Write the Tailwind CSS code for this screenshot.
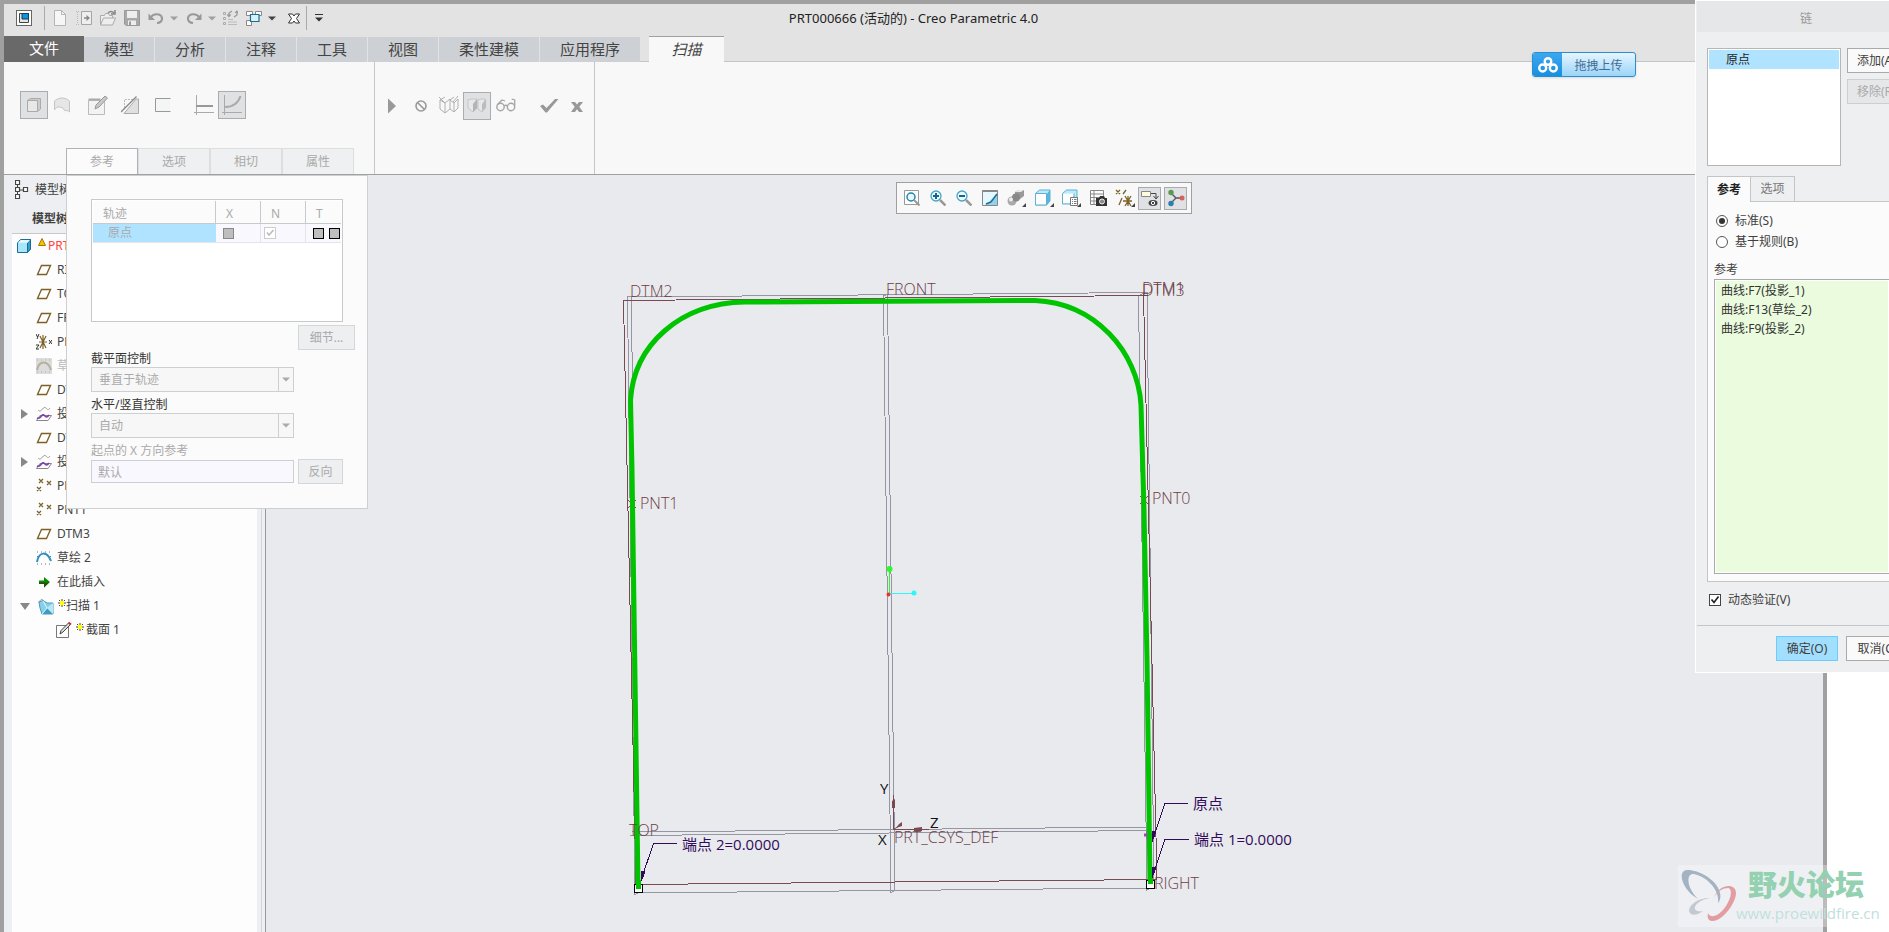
<!DOCTYPE html>
<html lang="zh-CN">
<head>
<meta charset="utf-8">
<meta name="viewport" content="width=device-width, initial-scale=1">
<title>PRT000666 (活动的) - Creo Parametric 4.0</title>
<script src="https://cdn.jsdelivr.net/npm/@tailwindcss/browser@4"></script>
</head>
<body class="relative flex min-h-screen overflow-hidden bg-white font-['Noto_Sans','Noto_Sans_CJK_SC',sans-serif] text-xs text-[#404040]">

<!-- shared symbols -->
<svg class="hidden">
  <symbol id="plane" viewBox="0 0 16 16"><path d="M5.500 3.500H14.500L10.500 12.500H1.500Z" fill="#fff" stroke="#7d6228" stroke-width="1.400"/></symbol>
  <symbol id="points" viewBox="0 0 16 16"><path d="M3 1l4 4m0-4l-4 4M11 3l4 4m0-4l-4 4M1 9l4 4m0-4l-4 4" stroke="#7d6228" stroke-width="1.300" fill="none"/></symbol>
  <symbol id="proj" viewBox="0 0 16 16"><path d="M4 9.500H15.500L12 14.500H.500Z" fill="#fff" stroke="#888"/><path d="M2 4c2 2 3 1 4.500-1S9 1 10 2s2 3 4 0" fill="none" stroke="#999"/><path d="M1 12c2 1 3 0 4.500-2S8 9 9 10s2 2 4-1" fill="none" stroke="#7a3fb0" stroke-width="1.600"/></symbol>
  <symbol id="spark" viewBox="0 0 8 8"><path d="M4 0v8M0 4h8M1 1l6 6M7 1L1 7" stroke="#444"/><rect x="2" y="2" width="4" height="4" fill="#ff0"/></symbol>
  <symbol id="caret" viewBox="0 0 8 5"><path d="M0 .500h8L4 4.500Z" fill="currentColor"/></symbol>
</svg>

<main class="flex min-w-0 flex-1 flex-col border-4 border-b-0 border-[#a0a0a0] bg-[#e8eaee]">

  <!-- title bar -->
  <header class="grid h-8 grid-cols-[1fr_auto_1fr] bg-[#e3e3e3]">
    <div class="flex h-7 items-center pl-2 text-[#a0a0a0]">
      <button class="flex w-6 justify-center" aria-label="窗口"><svg class="size-4" viewBox="0 0 16 16"><rect x=".5" y=".5" width="15" height="15" fill="#fff" stroke="#666"/><path d="M3.500 3.500h9v9h-9z" fill="#e3e3e3" stroke="#444"/><path d="M6 3.500h6.500V9H6z" fill="#0a95dc" stroke="#173b52"/></svg></button>
      <span class="ml-2 h-6 w-px bg-[#aaa]"></span>
      <button class="ml-[3px] flex w-6 justify-center" aria-label="新建"><svg class="size-4" viewBox="0 0 16 16"><path d="M2.500.500h7l4 4v11h-11z" fill="#f6f6f6" stroke="#b5b5b5"/><path d="M9.500.500v4h4" fill="none" stroke="#b5b5b5"/></svg></button>
      <button class="flex w-6 justify-center" aria-label="插入"><svg class="size-4" viewBox="0 0 16 16"><path d="M5.500 1.500h10v13h-10z" fill="#eee" stroke="#a5a5a5"/><path d="M0 1.500h4M0 14.500h4M1.500 2v12" stroke="#bbb" stroke-dasharray="1 1"/><path d="M8 8h4" stroke="#888" stroke-width="1.500"/><path d="M10.500 5l3.500 3-3.500 3z" fill="#888"/></svg></button>
      <button class="flex w-6 justify-center" aria-label="打开"><svg class="size-4" viewBox="0 0 16 16"><path d="M.500 15V5.500h4l1-2h3l1 2h3V8M.500 15l3-7H15.500l-3 7Z" fill="#eee" stroke="#aaa"/><path d="M8 3c2-2 4-2 6 0M15 0v4h-4" fill="none" stroke="#888" stroke-width="1.500"/></svg></button>
      <button class="flex w-6 justify-center" aria-label="保存"><svg class="size-4" viewBox="0 0 16 16"><path d="M.500.500h15v15H2l-1.500-1.500Z" fill="#a8a8a8" stroke="#999"/><path d="M3 1h10v7H3zM4 10.500h8V15H4z" fill="#eee"/><path d="M5 11.500h2V15H5z" fill="#999"/></svg></button>
      <button class="flex w-6 justify-center" aria-label="撤销"><svg class="size-4" viewBox="0 0 16 16"><path d="M2.500 8C5 3 13 3 14 8c.500 3-2 5-5 5" fill="none" stroke="#999" stroke-width="2.200"/><path d="M.500 3.500V10H7z" fill="#999"/></svg></button>
      <button class="flex w-3 justify-center" aria-label="撤销列表"><svg class="h-[5px] w-2"><use href="#caret"/></svg></button>
      <button class="ml-0.5 flex w-6 justify-center" aria-label="重做"><svg class="size-4" viewBox="0 0 16 16"><path d="M13.500 8C11 3 3 3 2 8c-.500 3 2 5 5 5" fill="none" stroke="#999" stroke-width="2.200"/><path d="M15.500 3.500V10H9z" fill="#999"/></svg></button>
      <button class="flex w-3 justify-center" aria-label="重做列表"><svg class="h-[5px] w-2"><use href="#caret"/></svg></button>
      <button class="flex w-6 justify-center" aria-label="重新生成"><svg class="size-4" viewBox="0 0 16 16"><path d="M1.500 2.500h2v2h-2zM1.500 7.500h2v2h-2zM1.500 12.500h2v2h-2z" fill="none" stroke="#aaa"/><path d="M6 9.500h5M6 12h9M6 14.500h9" stroke="#bbb"/><path d="M7 6V3l3-2M15 2v3l-3 2" fill="none" stroke="#999" stroke-width="1.300"/><path d="M4.500 4.500h5L7 7.500zM12.500 3h4L15 0z" fill="#999"/></svg></button>
      <button class="flex w-6 justify-center" aria-label="窗口切换"><svg class="size-4" viewBox="0 0 16 16"><path d="M.500 1.500h6v4h-6zM9.500 1.500h6v4h-6zM.500 10.500h5v5h-5z" fill="#fff" stroke="#888"/><path d="M4.500 4.500h8.500v7H4.500z" fill="#d8f2fc" stroke="#1d6d93" stroke-width="1.200"/></svg></button>
      <button class="flex w-3 justify-center text-[#444]" aria-label="窗口列表"><svg class="h-[5px] w-2"><use href="#caret"/></svg></button>
      <button class="ml-1 flex w-6 justify-center" aria-label="关闭"><svg class="h-4 w-3" viewBox="0 0 12 16"><path d="M.500 4h4L6 6l1.500-2h4L8.500 8.500l3 4.500h-4L6 11l-1.500 2h-4l3-4.500Z" fill="#fff" stroke="#333"/></svg></button>
      <span class="h-6 w-px bg-[#aaa]"></span>
      <button class="ml-2 flex w-2 flex-col items-center gap-0.5 text-[#333]" aria-label="自定义"><span class="h-px w-2 bg-[#333]"></span><svg class="h-[5px] w-2"><use href="#caret"/></svg></button>
    </div>
    <h1 class="pt-1.5 text-[13px] leading-4 text-[#222]">PRT000666 (活动的) - Creo Parametric 4.0</h1>
    <span></span>
  </header>

  <!-- ribbon tabs -->
  <nav class="flex h-[26px] items-stretch bg-[#e3e3e3] text-[15px] leading-5 text-[#444]">
    <button class="w-20 bg-[#696969] pb-0.5 text-white">文件</button>
    <div class="flex gap-px pt-px">
      <button class="w-[70px] bg-[#cdd1d5] pb-0.5">模型</button>
      <button class="w-[70px] bg-[#cdd1d5] pb-0.5">分析</button>
      <button class="w-[70px] bg-[#cdd1d5] pb-0.5">注释</button>
      <button class="w-[70px] bg-[#cdd1d5] pb-0.5">工具</button>
      <button class="w-[70px] bg-[#cdd1d5] pb-0.5">视图</button>
      <button class="w-[100px] bg-[#cdd1d5] pb-0.5">柔性建模</button>
      <button class="w-[100px] bg-[#cdd1d5] pb-0.5">应用程序</button>
    </div>
    <span class="w-[9px] border-b border-[#c3c6c8]"></span>
    <button class="w-[75px] border-t border-[#a0a0a0] bg-[#f8f8f8] pb-0.5 italic">扫描</button>
    <span class="flex-1 border-b border-[#c3c6c8]"></span>
  </nav>

  <!-- ribbon -->
  <section class="relative flex h-[113px] border-b border-[#a0a0a0] bg-[#f8f8f8]">
    <div class="flex w-[371px] flex-col justify-between border-r border-[#c3c6c8] pt-[29px]">
      <div class="flex pl-4">
        <button class="flex size-7 items-center justify-center border border-[#aaadb0] bg-[#e0e1e3]" aria-label="实体"><svg class="size-4" viewBox="0 0 16 16"><path d="M1.500 3.500l3-2h10V12l-3 2.500h-10z" fill="#ccc" stroke="#aaa"/><path d="M1.500 3.500h10v11h-10z" fill="#e8e8e8" stroke="#aaa"/></svg></button>
        <button class="flex size-7 items-center justify-center" aria-label="曲面"><svg class="size-4" viewBox="0 0 16 16"><path d="M.500 4C5 0 11 0 15.500 4v11c-1-1-3-2-5-1.500C10 11 6 9.500 4 10c-2 .5-3 2-3.500 3z" fill="#e6e6e6" stroke="#c4c4c4"/></svg></button>
        <button class="ml-2 flex size-7 items-center justify-center" aria-label="草绘"><svg class="size-5" viewBox="0 0 20 20"><path d="M.500 5.500h16v14H.500z" fill="#f3f3f3" stroke="#bbb"/><path d="M.500 4.500h12" stroke="#aaa" stroke-width="2"/><path d="M7 14l1-4L17 1l2.500 2L11 12Z" fill="#c8c8c8" stroke="#999"/></svg></button>
        <button class="ml-1 flex size-7 items-center justify-center" aria-label="移除材料"><svg class="size-[18px]" viewBox="0 0 18 18"><path d="M17.500 3v14.500H3L15 3z" fill="#e0e0e0" stroke="#aaa"/><path d="M3.500 12V3.500H12" fill="none" stroke="#bbb" stroke-dasharray="2 1"/><path d="M0 16L15.500.500" stroke="#888" stroke-width="1.300"/></svg></button>
        <button class="ml-[5px] flex size-7 items-center justify-center" aria-label="薄板"><svg class="size-4" viewBox="0 0 16 16"><path d="M15.500 1.500H.500v13h15" fill="#f4f6f6" stroke="#999"/></svg></button>
        <button class="ml-[13px] flex size-7 items-center justify-center" aria-label="恒定截面"><svg class="size-5" viewBox="0 0 20 20"><path d="M2.500 0v20M0 17.500h20" stroke="#aaa"/><path d="M2 11h17" stroke="#999" stroke-width="2"/></svg></button>
        <button class="flex size-7 items-center justify-center border border-[#aaadb0] bg-[#e0e1e3]" aria-label="可变截面"><svg class="size-5" viewBox="0 0 20 20"><path d="M2.500 0v20M0 17.500h20" stroke="#aaa"/><path d="M3 12c7 0 13-3 15.500-11" fill="none" stroke="#aaa" stroke-width="2"/></svg></button>
      </div>
      <div class="ml-[62px] flex text-[#aaa]">
        <button class="h-[26px] w-[72px] border border-b-0 border-[#b0b3b3] bg-[#fbfbfb]">参考</button>
        <button class="h-[26px] w-[72px] border border-b-0 border-[#dcdfe0] bg-[#eef0f1]">选项</button>
        <button class="h-[26px] w-[72px] border border-b-0 border-[#dcdfe0] bg-[#eef0f1]">相切</button>
        <button class="h-[26px] w-[72px] border border-b-0 border-[#dcdfe0] bg-[#eef0f1]">属性</button>
      </div>
    </div>
    <div class="flex w-[220px] items-start border-r border-[#c3c6c8] pt-[30px] pl-[3px]">
      <button class="flex size-7 items-center justify-center" aria-label="继续"><svg class="size-4" viewBox="0 0 16 16"><path d="M4 .500v15L12 8z" fill="#999"/></svg></button>
      <button class="ml-px flex size-7 items-center justify-center" aria-label="无预览"><svg class="size-3" viewBox="0 0 12 12"><circle cx="6" cy="6" r="5" fill="none" stroke="#999" stroke-width="1.600"/><path d="M2.500 2.500l7 7" stroke="#999" stroke-width="1.600"/></svg></button>
      <button class="flex size-7 items-center justify-center" aria-label="分离预览"><svg class="size-5" viewBox="0 0 20 20"><path d="M1 4l5 3v10l-5-4zM6 7l5-4v10l-5 4M1 4l5-3M11 4l4 3v9l-4-3M15 7l4-4v9l-4 4M11 4l4-3M0 1l6 6M19 0l-5 6" fill="none" stroke="#b0b0b0"/></svg></button>
      <button class="flex size-7 items-center justify-center border border-[#aaadb0] bg-[#e0e1e3]" aria-label="连接预览"><svg class="size-5" viewBox="0 0 20 20"><path d="M1 4l3-1h6v9l-4 4-5-4z" fill="#e8e8e8" stroke="#c4c4c4"/><path d="M6 8l4-5v9l-4 4z" fill="#b4b4b4"/><path d="M11 4l3-1h4v9l-3 4-4-3z" fill="#e8e8e8" stroke="#c4c4c4"/><path d="M15 8l4-5v9l-4 3z" fill="#bcbcbc"/></svg></button>
      <button class="ml-px flex size-7 items-center justify-center" aria-label="校验预览"><svg class="size-5" viewBox="0 0 20 20"><circle cx="4.500" cy="11" r="3.700" fill="none" stroke="#a5a5a5" stroke-width="1.400"/><circle cx="15" cy="11" r="3.700" fill="none" stroke="#a5a5a5" stroke-width="1.400"/><path d="M8 10q1.700-1.500 3.400 0M1 9l5-5 3 1M18.700 10V4l-3-1" fill="none" stroke="#a5a5a5" stroke-width="1.300"/></svg></button>
      <button class="ml-[15px] flex size-7 items-center justify-center" aria-label="确定"><svg class="size-5" viewBox="0 0 20 20"><path d="M1 10l3-1.500 3.500 3.500L16 3h3.500L8 16.500H6.500z" fill="#999"/></svg></button>
      <button class="flex size-7 items-center justify-center" aria-label="取消"><svg class="mt-0.5 size-3" viewBox="0 0 12 12"><path d="M0 1h4l2 2.500L8 1h4L8.300 5.800 12 11H8L6 8.200 4 11H0l3.700-5.200z" fill="#999"/></svg></button>
    </div>

    <!-- references slide-down panel -->
    <div class="absolute top-full left-[62px] z-10 mt-px flex h-[334px] w-[302px] flex-col items-start border border-[#cdd0d0] bg-[#fbfbfb] px-6 pt-[23px] text-[#aaa]">
      <div class="h-[123px] w-[252px] border border-[#c8caca] bg-white p-px">
        <table class="w-full table-fixed border-separate border-spacing-0 text-left">
          <colgroup><col class="w-[123px]"><col class="w-[45px]"><col class="w-[45px]"><col></colgroup>
          <thead>
            <tr class="h-[23px] bg-[#fbfbfb]">
              <th class="border-r border-b border-[#c8caca] pt-1 pl-2.5 font-normal">轨迹</th><th class="border-r border-b border-[#c8caca] pt-1 pl-2.5 font-normal">X</th><th class="border-r border-b border-[#c8caca] pt-1 pl-2.5 font-normal">N</th><th class="border-b border-[#c8caca] pt-1 pl-2.5 font-normal">T</th>
            </tr>
          </thead>
          <tbody>
            <tr class="h-[19px] bg-[#faf8ff] leading-4">
              <td class="border-b border-[#e4e4ea] bg-[#b0e3ff] pl-[15px]">原点</td>
              <td class="border-r border-b border-[#e4e4ea] pl-[7px]"><input type="checkbox" disabled aria-label="X" class="block size-[11px] appearance-none border border-[#888] bg-[#bebebe]"></td>
              <td class="border-r border-b border-[#e4e4ea] pl-[3px]"><span class="grid size-3"><input type="checkbox" checked disabled aria-label="N" class="col-start-1 row-start-1 size-3 appearance-none border border-[#ccc] bg-white"><svg class="col-start-1 row-start-1 size-3" viewBox="0 0 12 12"><path d="M3 5.500L5 8l4.500-5" fill="none" stroke="#bbb" stroke-width="1.500"/></svg></span></td>
              <td class="border-b border-[#e4e4ea] pl-[7px]"><span class="flex gap-[5px]"><input type="checkbox" disabled aria-label="T 1" class="size-[11px] shrink-0 appearance-none border border-black bg-[#bebebe]"><input type="checkbox" disabled aria-label="T 2" class="size-[11px] shrink-0 appearance-none border border-black bg-[#bebebe]"></span></td>
            </tr>
          </tbody>
        </table>
      </div>
      <button disabled class="mt-[3px] -mr-3 h-[25px] w-[57px] self-end border border-[#d4d6d8] bg-[#edeff0]">细节...</button>
      <label for="sec" class="text-xs leading-[17px] text-[#333]">截平面控制</label>
      <span class="grid h-[25px] w-[203px]">
        <select id="sec" disabled class="col-start-1 row-start-1 appearance-none border border-[#cdd0d0] bg-[#f7f7f7] pl-[7px] opacity-100"><option>垂直于轨迹</option></select>
        <span class="pointer-events-none col-start-1 row-start-1 flex w-4 items-center justify-center justify-self-end border border-[#cdd0d0]"><svg class="h-[5px] w-2"><use href="#caret"/></svg></span>
      </span>
      <label for="hv" class="pt-1 leading-[17px] text-[#333]">水平/竖直控制</label>
      <span class="grid h-[25px] w-[203px]">
        <select id="hv" disabled class="col-start-1 row-start-1 appearance-none border border-[#cdd0d0] bg-[#f7f7f7] pl-[7px] opacity-100"><option>自动</option></select>
        <span class="pointer-events-none col-start-1 row-start-1 flex w-4 items-center justify-center justify-self-end border border-[#cdd0d0]"><svg class="h-[5px] w-2"><use href="#caret"/></svg></span>
      </span>
      <label for="xdir" class="pt-1 leading-[17px]">起点的 X 方向参考</label>
      <div class="flex items-center gap-1">
        <input id="xdir" disabled value="默认" class="h-[23px] w-[203px] border border-[#cdd0d0] bg-[#faf8ff] px-1.5">
        <button disabled class="h-[25px] w-[45px] border border-[#d4d6d8] bg-[#edeff0]">反向</button>
      </div>
    </div>
  </section>

  <!-- workspace -->
  <div class="flex min-h-0 flex-1">
    <aside class="flex w-[262px] flex-col border-r border-[#999] bg-[#edeff2] pr-[3px] whitespace-nowrap">
      <div class="flex flex-1 flex-col border-r border-[#d4d6d8] pr-1 pl-2">
        <div class="flex h-[30px] items-center gap-1.5 pl-[3px]"><svg class="h-5 w-3.5" viewBox="0 0 14 20"><path d="M2.500 2v16M2.500 10H9" stroke="#444" fill="none"/><path d="M.500.500h4v4h-4zM.500 7.500h4v4h-4zM.500 14.500h4v4h-4zM8.500 7.500h4v4h-4z" fill="#fff" stroke="#444" stroke-width="1.200"/></svg><span>模型树</span></div>
        <h2 class="h-7 pl-5 text-xs leading-7 font-bold">模型树</h2>
        <ul class="flex-1 border-t border-[#c8caca] bg-[#fdfdfd] text-[#444]">
          <li class="flex h-6 items-center pl-[5px] text-[#f44]"><svg class="size-3.5" viewBox="0 0 14 14"><path d="M.500 4l3-3.500h10V10l-3 3.500h-10z" fill="#a8e6fc" stroke="#1c6d92"/><path d="M10.500 4l3-3.500V10l-3 3.500z" fill="#2fa0cf" stroke="#1c6d92"/><path d="M1 3.700L4 1h9L10.500 3.700z" fill="#e4f8ff"/></svg><svg class="mb-2 ml-[7px] h-2 w-2" viewBox="0 0 8 8"><path d="M4 .500L7.500 7.500H.500z" fill="#f5c400" stroke="#a87800"/></svg><span class="ml-0.5">PRT000666.PRT</span></li>
          <li class="flex h-6 items-center gap-[5px] pl-6"><svg class="size-4"><use href="#plane"/></svg>RIGHT</li>
          <li class="flex h-6 items-center gap-[5px] pl-6"><svg class="size-4"><use href="#plane"/></svg>TOP</li>
          <li class="flex h-6 items-center gap-[5px] pl-6"><svg class="size-4"><use href="#plane"/></svg>FRONT</li>
          <li class="flex h-6 items-center gap-[5px] pl-6"><svg class="size-4" viewBox="0 0 16 16"><path d="M7 1v14M3 8h8M10 2L4 14M4 2l6 12" stroke="#7d6228" stroke-width="1.200"/><path d="M0 0l1.500 3M3 0L1 5M13 6l3 4m0-4l-3 4M0 11h3l-3 4h3" fill="none" stroke="#333"/></svg>PRT_CSYS_DEF</li>
          <li class="flex h-6 items-center gap-[5px] pl-6 text-[#bbb]"><svg class="size-4" viewBox="0 0 16 16"><path d="M0 0h16v16H0z" fill="#dcdcdc"/><path d="M1 12C3 2 12 2 15 12" fill="none" stroke="#b5b29b" stroke-width="2"/><path d="M1 2h14M1 14h14" stroke="#aaa" stroke-dasharray="1 3"/></svg>草绘 1</li>
          <li class="flex h-6 items-center gap-[5px] pl-6"><svg class="size-4"><use href="#plane"/></svg>DTM1</li>
          <li class="flex h-6 items-center pl-[9px]"><svg class="mr-2 h-2.5 w-[7px]" viewBox="0 0 7 10"><path d="M0 0l7 5-7 5z" fill="#888"/></svg><svg class="mr-[5px] size-4"><use href="#proj"/></svg>投影 1</li>
          <li class="flex h-6 items-center gap-[5px] pl-6"><svg class="size-4"><use href="#plane"/></svg>DTM2</li>
          <li class="flex h-6 items-center pl-[9px]"><svg class="mr-2 h-2.5 w-[7px]" viewBox="0 0 7 10"><path d="M0 0l7 5-7 5z" fill="#888"/></svg><svg class="mr-[5px] size-4"><use href="#proj"/></svg>投影 2</li>
          <li class="flex h-6 items-center gap-[5px] pl-6"><svg class="size-4"><use href="#points"/></svg>PNT0</li>
          <li class="flex h-6 items-center gap-[5px] pl-6"><svg class="size-4"><use href="#points"/></svg>PNT1</li>
          <li class="flex h-6 items-center gap-[5px] pl-6"><svg class="size-4"><use href="#plane"/></svg>DTM3</li>
          <li class="flex h-6 items-center gap-[5px] pl-6"><svg class="size-4" viewBox="0 0 16 16"><path d="M1 2h14M1 14h14M1.500 6v6M14.500 6v6" stroke="#777" stroke-dasharray="1 3"/><path d="M1 12C3 1 11 1 15 11" fill="none" stroke="#2b8fbf" stroke-width="2"/></svg>草绘 2</li>
          <li class="flex h-6 items-center gap-[5px] pl-6"><svg class="size-4" viewBox="0 0 16 16"><path d="M3 6.500h5V3l6 5-6 5.500V10H3z" fill="#0a8a00"/><path d="M3 8.500h10L8 13.500V10H3z" fill="#265010"/></svg>在此插入</li>
          <li class="flex h-6 items-center pl-2"><svg class="mr-[7px] h-[7px] w-2.5" viewBox="0 0 10 7"><path d="M0 0h10L5 7z" fill="#888"/></svg><svg class="size-[17px]" viewBox="0 0 17 17"><path d="M1 4.500L5 1l2 3.500" fill="#fff" stroke="#aaa"/><path d="M2 4l4-1.500 4 2.500h6v11H5L3 10z" fill="#86d0ea" stroke="#4a9dbd"/><path d="M5 16l5-6 6 6z" fill="#3e9cc2"/><path d="M16 5v11l-6-6z" fill="#b8e8f8"/><path d="M6 3l4 7M10 10L5 16" stroke="#e4f8ff" fill="none"/></svg><svg class="mb-1.5 ml-1 size-2"><use href="#spark"/></svg>扫描 1</li>
          <li class="flex h-6 items-center pl-11"><svg class="size-4" viewBox="0 0 16 16"><path d="M.500 3.500h12v12H.500z" fill="#fff" stroke="#777"/><path d="M4 12l1-3.500L12.500 1l2 1.500L7 10z" fill="#ddd" stroke="#444"/><path d="M12.500.500l2.500 2" stroke="#c33" stroke-width="2"/></svg><svg class="mb-1.5 ml-1 size-2"><use href="#spark"/></svg><span class="ml-0.5">截面 1</span></li>
        </ul>
      </div>
    </aside>

    <section class="relative min-w-0 flex-1 overflow-hidden">
      <!-- 3D model view: datum planes, trajectory and labels -->
      <svg class="absolute top-0 left-0 h-[757px] w-[1557px]" viewBox="266 175 1557 757" font-size="15" font-weight="300" font-family="'Open Sans','Noto Sans CJK SC',sans-serif">
        <g fill="none" shape-rendering="crispEdges" stroke="#9496a4">
          <path d="M627 297L1147 292.500M627.500 297L635 895M631.500 297L637 891M883.500 296L891 893M887.500 295L895 890M883 296l5-1.500M1138.500 296L1147 891M1147 292L1154 889M632 832L1150 827M630 835.500L1150 830.500M635 893L1147 888M635 895l4-3M1146 891l4-3M891 893l4-3M1138.500 296l5-3"/>
          <path stroke="#7a4a52" d="M623.500 300.500L1148 295.500M623.500 300.500L636 884.500L1156 879.500M1143.500 294L1157 880"/>
        </g>
        <path d="M628 500l8 8m0-8l-8 8M1140 496l8 8m0-8l-8 8" stroke="#b0325a" fill="none"/>
        <path d="M1144 835h11M1148 831v8" stroke="#b838d8" stroke-width="3"/>
        <path d="M638 886L632 470L630.500 400C634 345 680 303 745 302L1035 300.500C1095 303 1138 352 1141 405L1144 510L1147 660L1150 882" fill="none" stroke="#00c400" stroke-width="5"/>
        <g fill="#fff" stroke="#000"><rect x="634.500" y="884.500" width="8" height="8"/><rect x="1146.500" y="880.500" width="8" height="8"/></g>
        <path d="M638.500 880v9M1150.500 876v8" stroke="#00c400" stroke-width="5"/>
        <g fill="#6e3c45" font-size="16">
          <text x="630" y="297">DTM2</text><text x="886" y="295">FRONT</text><text x="1142" y="294">DTM1</text><text x="1142" y="296">DTM3</text>
          <text x="640" y="509">PNT1</text><text x="1152" y="504">PNT0</text><text x="629" y="836">TOP</text><text x="894" y="843">PRT_CSYS_DEF</text><text x="1154" y="889">RIGHT</text>
        </g>
        <path d="M893.500 795v34.500H929M893.500 829.500l8-5" stroke="#7a4a52" fill="none"/>
        <path d="M892 808v-7l3-2v9zM914 828l8-1v4l-8 0zM896 828l3-4 3-2v4z" fill="#7a4a52"/>
        <g fill="#111" font-weight="400"><text x="880" y="794">Y</text><text x="878" y="845">X</text><text x="930" y="828">Z</text></g>
        <g stroke="#320a5a" fill="none" shape-rendering="crispEdges"><path d="M641 880L653.500 843.500H677M1152 842L1165 803.500H1188M1152 878L1165 839.500H1189"/><path d="M641 881l1-10 3 1zM1152 841l1-10 3 1zM1152 877l1-10 3 1z" fill="#320a5a"/></g>
        <g fill="#320a5a" font-weight="400"><text x="682" y="850">端点 2=0.0000</text><text x="1193" y="809">原点</text><text x="1194" y="845">端点 1=0.0000</text></g>
        <path d="M889.500 569v24" stroke="#2cf82c"/><path d="M890 593.500h24" stroke="#2cf8f8"/>
        <circle cx="889.500" cy="569" r="3" fill="#2cf82c"/><circle cx="914" cy="593" r="2.500" fill="#2cf8f8"/><circle cx="888.500" cy="594.500" r="2" fill="#f03030"/>
      </svg>

      <!-- in-graphics toolbar -->
      <div class="absolute top-[7px] left-[630px] flex h-8 items-center border border-[#a0a0a0] bg-[#f8f8f8] pr-1 pl-0.5">
        <button class="flex w-[26px] justify-center" aria-label="重新调整"><svg class="size-4" viewBox="0 0 16 16"><path d="M.500.500h14v14H.500z" fill="#fff" stroke="#999"/><circle cx="7" cy="7" r="4" fill="#e8f8ff" stroke="#2485ad" stroke-width="1.500"/><path d="M10 10l5.500 5.500" stroke="#999" stroke-width="2"/></svg></button>
        <button class="flex w-[26px] justify-center" aria-label="放大"><svg class="size-4" viewBox="0 0 16 16"><circle cx="6" cy="6" r="5" fill="#e8f8ff" stroke="#4ba3c6" stroke-width="1.300"/><path d="M3 6h6M6 3v6" stroke="#17648a" stroke-width="2"/><path d="M10 10l5.500 5.500" stroke="#999" stroke-width="2.500"/></svg></button>
        <button class="flex w-[26px] justify-center" aria-label="缩小"><svg class="size-4" viewBox="0 0 16 16"><circle cx="6" cy="6" r="5" fill="#e8f8ff" stroke="#4ba3c6" stroke-width="1.300"/><path d="M3 6h6" stroke="#17648a" stroke-width="2"/><path d="M10 10l5.500 5.500" stroke="#999" stroke-width="2.500"/></svg></button>
        <button class="flex w-[26px] justify-center" aria-label="重画"><svg class="size-4" viewBox="0 0 16 16"><path d="M.500.500h15v15H.500z" fill="#8fd3ee" stroke="#888"/><path d="M1 2h14v2L8 11l-5 4H1z" fill="#e6f8ff"/><path d="M4 14l5-2 6-8" fill="none" stroke="#1c6d92" stroke-width="1.500"/><path d="M.500 1h15" stroke="#888" stroke-width="2"/></svg></button>
        <button class="flex w-[27px] justify-center" aria-label="渲染"><svg class="h-[18px] w-5" viewBox="0 0 20 18"><path d="M8 3l3-2h6v6l-4 3H8z" fill="#999"/><path d="M8 3l3-2h6l-3 2z" fill="#e8e8e8"/><circle cx="5" cy="12" r="4.500" fill="#aaa"/><circle cx="9" cy="8.500" r="4" fill="#888"/><circle cx="4" cy="10.500" r="2" fill="#eee"/><path d="M19 14v4h-4z" fill="#444"/></svg></button>
        <button class="flex w-[27px] justify-center" aria-label="显示样式"><svg class="h-[18px] w-5" viewBox="0 0 20 18"><path d="M1.500 4.500l4-3.500H16v11l-3.500 4h-11z" fill="#b8ebff" stroke="#5fb0d0"/><path d="M1.500 4.500h11V16h-11z" fill="#fff" stroke="#5fb0d0"/><path d="M13 4.500L16 1v11l-3 4z" fill="#55b7de"/><path d="M20 14v4h-4z" fill="#444"/></svg></button>
        <button class="flex w-[27px] justify-center" aria-label="已命名视图"><svg class="h-[18px] w-5" viewBox="0 0 20 18"><path d="M1.500 4.500l4-3.500H16v8M1.500 4.500V15H9V8h4V4.500" fill="#b8ebff" stroke="#5fb0d0"/><path d="M2 5h10v9H2z" fill="#fff"/><path d="M9.500 8.500h7v8h-7z" fill="#fff" stroke="#777"/><path d="M11 10.500h1M13 10.500h2.500M11 12.500h1M13 12.500h2.500M11 14.500h1M13 14.500h2.500" stroke="#777"/><path d="M20 14v4h-4z" fill="#444"/></svg></button>
        <button class="flex w-[27px] justify-center" aria-label="视图管理器"><svg class="h-[18px] w-5" viewBox="0 0 20 18"><path d="M2.500 1.500h13v14h-13zM2.500 5h13M2.500 8.500h13M2.500 12h13M6 1.500v14" fill="#fff" stroke="#888"/><path d="M8 9h3l1-2h4l1 2h2v8H8z" fill="#333"/><circle cx="14" cy="12.500" r="2.500" fill="#888" stroke="#eee"/></svg></button>
        <button class="flex w-[27px] justify-center" aria-label="基准显示"><svg class="h-[18px] w-5" viewBox="0 0 20 18"><path d="M1 1l4 4m0-4L1 5M11 1L8 5M7 9l-3 7M13 7v10M8 12h9M10 7l6 10M16 7l-6 10" stroke="#7d6228" stroke-width="1.300"/><path d="M20 14v4h-4z" fill="#444"/></svg></button>
        <button class="flex size-[23px] items-center justify-center border border-[#a8acb0] bg-[#dfe1e4]" aria-label="注释显示"><svg class="h-[18px] w-[18px]" viewBox="0 0 18 18"><path d="M.500 2.500h9v5h-9z" fill="#fffbe0" stroke="#888"/><path d="M10 4.500h5v5M12.500 7l2.500 3 2.500-3" fill="none" stroke="#444"/><ellipse cx="12" cy="14" rx="4.500" ry="3" fill="#444"/><circle cx="12" cy="14" r="1.700" fill="#444" stroke="#fff"/></svg></button>
        <button class="ml-[3px] flex size-[23px] items-center justify-center border border-[#a8acb0] bg-[#dfe1e4]" aria-label="旋转中心"><svg class="h-[18px] w-[18px]" viewBox="0 0 18 18"><path d="M4 4l5 5h6M9 9l-5 5" fill="none" stroke="#555" stroke-width="1.300"/><circle cx="4" cy="3.500" r="2.700" fill="#5a9a50"/><circle cx="15" cy="9" r="2.500" fill="#d86060"/><circle cx="4" cy="14.500" r="2.700" fill="#2a7fae"/></svg></button>
      </div>
    </section>
  </div>
</main>

<div class="w-[62px] shrink-0 bg-white"></div>

<!-- drag-to-upload floating widget -->
<button class="absolute top-[52px] right-[253px] flex h-[25px] w-[104px] items-stretch overflow-hidden rounded-[3px] border border-[#2a8ed0] bg-linear-to-b from-[#e6f5ff] to-[#9ad4f8] text-[#3f6d94] shadow">
  <span class="flex w-[29px] items-center justify-center bg-linear-to-b from-[#3ba8f0] to-[#1590e0]"><svg class="h-4 w-5" viewBox="0 0 20 16"><g fill="none" stroke="#fff" stroke-width="2.400"><circle cx="10" cy="4.500" r="3.300"/><circle cx="4.700" cy="11" r="3.500"/><circle cx="15.300" cy="11" r="3.500"/></g></svg></span>
  <span class="flex-1 self-center pt-0.5 leading-5">拖拽上传</span>
</button>

<!-- chain dialog -->
<section class="absolute top-0 right-0 z-20 flex h-[673px] w-[194px] flex-col overflow-hidden border border-r-0 border-white bg-[#eeeff1] whitespace-nowrap">
  <h2 class="ml-px h-[31px] bg-[#e6e7e9] pt-2 pl-[103px] text-xs leading-5 text-[#999]">链</h2>
  <div class="flex items-start gap-1.5 pt-4 pl-[11px]">
    <ul class="h-[118px] w-[134px] shrink-0 border border-[#b4b6b8] bg-white p-px"><li class="h-[19px] bg-[#b0e3ff] pl-[17px] leading-[19px] text-[#222]">原点</li></ul>
    <div class="flex flex-col gap-1.5">
      <button class="h-[25px] w-[62px] border border-[#a8aaac] bg-[#fafafa] pl-[9px] text-left">添加(A)</button>
      <button disabled class="h-[25px] w-[62px] border border-[#ccced0] bg-[#e6e7e9] pl-[9px] text-left text-[#aaa]">移除(R)</button>
    </div>
  </div>
  <div class="relative z-10 mt-2.5 flex pl-[11px]">
    <button class="-mb-px h-[26px] w-11 border border-b-0 border-[#c3c6c8] bg-[#fbfbfb] font-bold text-[#222]">参考</button>
    <button class="h-[25px] w-11 border border-b-0 border-l-0 border-[#c3c6c8] text-[#777]">选项</button>
  </div>
  <div class="ml-[11px] flex h-[381px] flex-col border border-r-0 border-[#c3c6c8] bg-[#fbfbfb] pt-2 pl-1.5">
    <label class="flex h-[21px] items-center gap-[7px] pl-0.5"><input type="radio" name="mode" checked class="size-3 appearance-none rounded-full border border-[#555] bg-[#333] bg-clip-content p-[2px]">标准(S)</label>
    <label class="flex h-[21px] items-center gap-[7px] pl-0.5"><input type="radio" name="mode" class="size-3 appearance-none rounded-full border border-[#555] bg-white">基于规则(B)</label>
    <h3 class="pt-[9px] text-xs leading-[18px]">参考</h3>
    <ul class="h-[295px] border border-r-0 border-[#a8aaac] bg-[#ebfcde] pt-px pl-1.5 leading-[19px] text-[#333] inset-ring inset-ring-white">
      <li>曲线:F7(投影_1)</li><li>曲线:F13(草绘_2)</li><li>曲线:F9(投影_2)</li>
    </ul>
  </div>
  <label class="mt-2 flex h-5 items-center gap-[7px] pl-[13px]"><span class="grid size-3"><input type="checkbox" checked class="col-start-1 row-start-1 size-3 appearance-none border border-[#444] bg-white"><svg class="col-start-1 row-start-1 size-3" viewBox="0 0 12 12"><path d="M2.500 5.500L5 8.500l4.500-6" fill="none" stroke="#222" stroke-width="1.700"/></svg></span>动态验证(V)</label>
  <div class="mt-[15px] ml-px flex gap-2 border-t border-[#c3c6c8] pt-2.5 pl-[79px]">
    <button class="h-[25px] w-[62px] shrink-0 border border-[#6cccff] bg-[#a2dffe]">确定(O)</button>
    <button class="h-[25px] w-[62px] shrink-0 border border-[#a8aaac] bg-[#fafafa]">取消(C)</button>
  </div>
</section>

<!-- forum watermark -->
<div class="absolute right-0 bottom-[5px] flex h-[62px] w-[211px] bg-white/30 whitespace-nowrap">
  <svg class="absolute top-1 left-0.5 h-[54px] w-[58px]" viewBox="0 0 58 54" fill="none"><path d="M18 30C4 22-2 6 4 2s32 5 36 22c1 4 0 8-2 10 2-12-10-26-24-29C6 4 6 18 18 30Z" fill="#a3b3c2"/><path d="M34 28c6-14 22-14 22-4S42 53 32 52c-4 0-5-4-4-8 2 5 8 4 14-2 8-8 12-22 6-23-5 0-10 3-14 9Z" fill="#e29da3"/><path d="M30 29C18 28 6 38 10 44c2 3 8 2 13-2-6 1-9-1-8-4 1-4 8-8 15-9Z" fill="#c3c9d2"/></svg>
  <div class="flex flex-col pl-[58px]">
    <p class="pt-0.5 pl-3 text-[29px] leading-9 font-black text-[#93d1b0]">野火论坛</p>
    <p class="font-['Open_Sans',sans-serif] text-[15px] leading-5 text-[#bfe0dd]">www.proewildfire.cn</p>
  </div>
</div>
</body>
</html>
